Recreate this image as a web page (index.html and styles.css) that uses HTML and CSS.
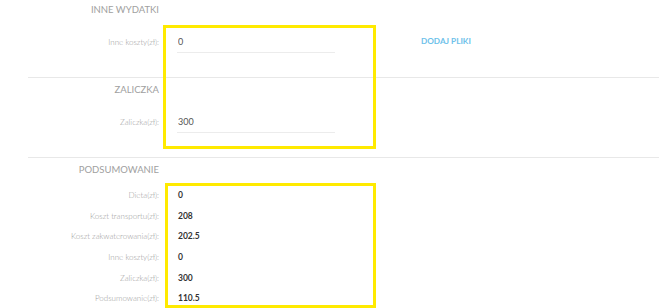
FILE: index.html
```html
<!DOCTYPE html>
<html>
<head>
    <title>Rozliczenie delegacji</title>
    <link rel="stylesheet" href="styles.css">
</head>
<body>
    <div class="page">
        <div class="section">
            <div class="section-title">Inne wydatki</div>
            <div class="field">
                <label class="field-label" for="inne">Inne koszty(zł):</label>
                <input class="field-input" type="text" id="inne" value="0">
                <a class="add-files" href="#">Dodaj pliki</a>
            </div>
        </div>

        <div class="section">
            <div class="section-title">Zaliczka</div>
            <div class="field">
                <label class="field-label" for="zaliczka">Zaliczka(zł):</label>
                <input class="field-input" type="text" id="zaliczka" value="300">
            </div>
        </div>

        <div class="section summary">
            <div class="section-title">Podsumowanie</div>
            <div class="summary-row"><span class="field-label">Dieta(zł):</span><span class="summary-value">0</span></div>
            <div class="summary-row"><span class="field-label">Koszt transportu(zł):</span><span class="summary-value">208</span></div>
            <div class="summary-row"><span class="field-label">Koszt zakwaterowania(zł):</span><span class="summary-value">202.5</span></div>
            <div class="summary-row"><span class="field-label">Inne koszty(zł):</span><span class="summary-value">0</span></div>
            <div class="summary-row"><span class="field-label">Zaliczka(zł):</span><span class="summary-value">300</span></div>
            <div class="summary-row"><span class="field-label">Podsumowanie(zł):</span><span class="summary-value">110.5</span></div>
        </div>

        <!-- highlight frames drawn over the form -->
        <div class="highlight highlight-inputs"></div>
        <div class="highlight highlight-summary"></div>
    </div>
</body>
</html>
```

FILE: styles.css
```css
body {
    margin: 0;
    padding: 0;
    background-color: #fff;
    font-family: Lato, "Open Sans", sans-serif;
}

.page {
    position: relative;
    width: 670px;
    height: 308px;
    overflow: hidden;
}

.section {
    margin: 0 11px 0 28px;
    padding-top: 2px;
    border-bottom: 1px solid #e8e8e8;
}

.section:first-child {
    padding-top: 0;
}

.section-title {
    width: 131px;
    height: 20px;
    line-height: 20px;
    text-align: right;
    text-transform: uppercase;
    font-size: 9.5px;
    color: #a0a0a0;
}

.field {
    display: flex;
    align-items: center;
    margin-top: 11px;
    padding-bottom: 24px;
}

.field-label {
    width: 131px;
    margin-right: 18px;
    flex-shrink: 0;
    text-align: right;
    font-size: 8px;
    font-weight: 300;
    color: #9a9a9a;
}

.field-input {
    width: 158px;
    height: 22px;
    box-sizing: border-box;
    padding: 0 1px;
    border: none;
    border-bottom: 1px solid #ececec;
    font-family: inherit;
    font-size: 9px;
    color: #555;
    outline: none;
}

.add-files {
    margin-left: 86px;
    margin-top: -2px;
    font-size: 8.2px;
    font-weight: 700;
    text-transform: uppercase;
    text-decoration: none;
    color: #6ec1ea;
}

.summary {
    border-bottom: none;
}

.summary .section-title {
    margin-bottom: 5px;
}

.summary-row {
    display: flex;
    align-items: center;
    height: 20.6px;
}

.summary-value {
    padding-left: 1px;
    font-size: 8.5px;
    font-weight: 700;
    color: #333;
}

.highlight {
    position: absolute;
    border: 3px solid #ffea00;
    box-sizing: border-box;
}

.highlight-inputs {
    left: 163px;
    top: 25px;
    width: 213px;
    height: 124px;
}

.highlight-summary {
    left: 165px;
    top: 183px;
    width: 211px;
    height: 125px;
}
```
